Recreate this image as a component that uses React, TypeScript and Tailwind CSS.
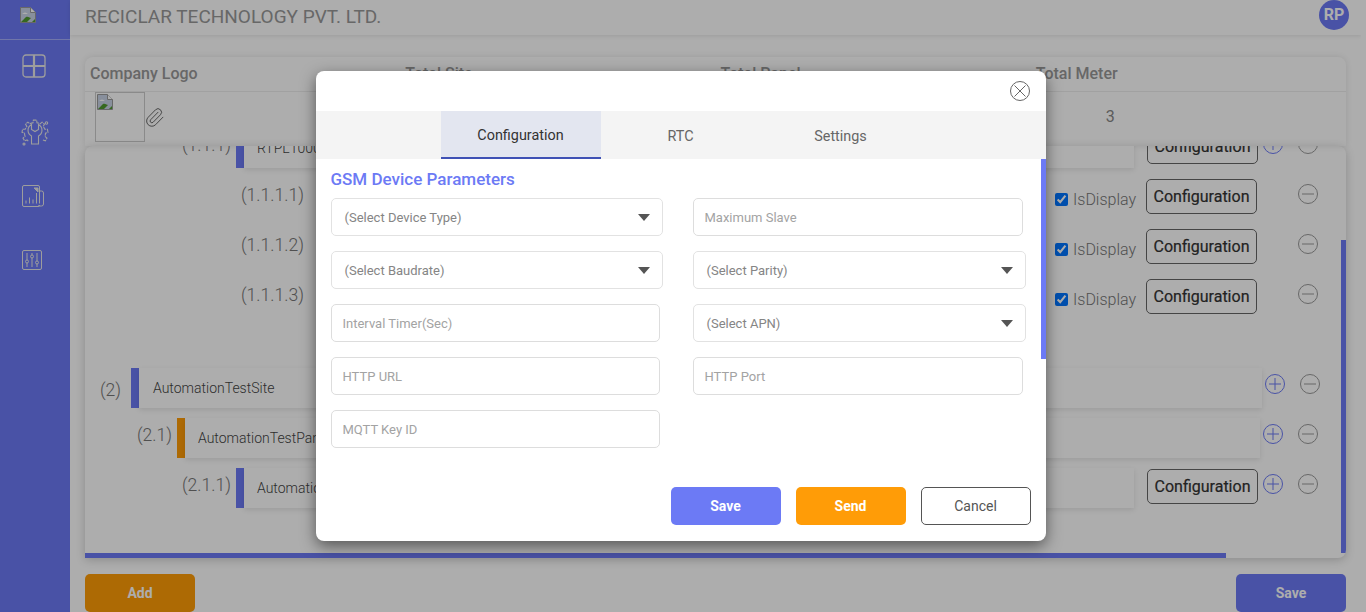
import { Paperclip } from 'lucide-react';

const font = { fontFamily: 'Roboto, sans-serif' };

// gear outline for the settings icon, open at the bottom where the wrench handle leaves it
const gearPath = (() => {
  const cx = 14;
  const cy = 14;
  const points: string[] = [];
  for (let i = 0; i < 7; i++) {
    const base = 130 + i * 40;
    const steps: Array<[number, number]> = [[base, 10.5], [base + 9, 10.5], [base + 13, 13], [base + 27, 13], [base + 31, 10.5]];
    steps.forEach(([deg, r]) => {
      const a = (deg * Math.PI) / 180;
      points.push(`${(cx + r * Math.cos(a)).toFixed(2)} ${(cy + r * Math.sin(a)).toFixed(2)}`);
    });
  }
  return `M${points.join('L')}`;
})();

function BrokenImage({ className }: { className?: string }) {
  return (
    <svg viewBox="0 0 16 16" className={className}>
      <path d="M0.5 0.5h10l5 5v10h-15z" fill="#c9d3e6" stroke="#9a9a9a" />
      <path d="M10.5 0.5v5h5" fill="#fff" stroke="#9a9a9a" />
      <path d="M2 7c2-2 4-2 6 0H2z" fill="#fff" />
      <path d="M1 15l5-5c2-1 4 1 5 1l-4 4z" fill="#4f9a2f" />
      <path d="M12 15l3-3v3z" fill="#4f9a2f" />
    </svg>
  );
}

function PlusIcon() {
  return (
    <svg viewBox="0 0 20 20" className="w-5 h-5 shrink-0" fill="none" stroke="#6c7af5" strokeWidth="1">
      <circle cx="10" cy="10" r="9.5" />
      <path d="M10 4v12M4 10h12" />
    </svg>
  );
}

function MinusIcon() {
  return (
    <svg viewBox="0 0 20 20" className="w-5 h-5 shrink-0" fill="none" stroke="#999" strokeWidth="1">
      <circle cx="10" cy="10" r="9.5" />
      <path d="M4 10h12" />
    </svg>
  );
}

function Caret() {
  return (
    <svg viewBox="0 0 12 7" className="w-[12px] h-[7px]">
      <path d="M0 0h12L6 7z" fill="#555" />
    </svg>
  );
}

function ConfigButton() {
  return (
    <button className="w-[111px] h-[35px] mt-px border border-[#666] rounded-[5px] text-[16px] text-[#333] [-webkit-text-stroke:0.2px_#333] shrink-0">
      Configuration
    </button>
  );
}

function TreeRow({ label, labelW, labelGap, barColor, text, textPad, cardW, config, plusGap, labelTop }: {
  label: string; labelW: string; labelGap: string; barColor: string; text: string; textPad: string; cardW: string; config?: boolean; plusGap: string; labelTop: string;
}) {
  return (
    <div className="flex items-start h-10">
      <span className={`${labelW} ${labelGap} ${labelTop} shrink-0 text-right text-[17.6px] font-light leading-[27px] text-[#777]`}>{label}</span>
      <div className={`${barColor} w-2 h-10 shrink-0`} />
      <div className={`${cardW} ${textPad} h-10 shrink-0 bg-white shadow-[0_2px_5px_rgba(0,0,0,0.1)] flex items-center text-[14px] font-light text-[#444]`}>
        {text}
      </div>
      {config && <div className="ml-[13px]"><ConfigButton /></div>}
      <div className={`${plusGap} mt-[6px] flex gap-[15px]`}>
        <PlusIcon />
        <MinusIcon />
      </div>
    </div>
  );
}

function MeterRow({ label }: { label: string }) {
  return (
    <div className="flex items-start h-10">
      <span className="w-[219px] mt-[4px] shrink-0 text-right text-[17.6px] font-light leading-[27px] text-[#777]">{label}</span>
      <label className="ml-[751px] w-[91px] h-[37px] shrink-0 flex items-center gap-[5px] text-[16px] font-light text-[#777]">
        <input type="checkbox" defaultChecked className="w-[13px] h-[13px] mt-[5px]" />
        <span className="mt-[7px]">IsDisplay</span>
      </label>
      <ConfigButton />
      <div className="ml-[41px] mt-[6px]"><MinusIcon /></div>
    </div>
  );
}

function TextField({ placeholder, width }: { placeholder: string; width: string }) {
  return (
    <input
      placeholder={placeholder}
      className={`${width} h-[38px] border border-[#ddd] rounded-[5px] pl-[11px] text-[13px] outline-none placeholder:text-[#a3a3a3]`}
    />
  );
}

function SelectField({ label, width }: { label: string; width: string }) {
  return (
    <button className={`${width} h-[38px] border border-[#e2e2e2] rounded-[5px] pl-[13px] pr-[12px] flex items-center justify-between text-[13px] text-[#858585]`}>
      <span className="mt-px">{label}</span>
      <Caret />
    </button>
  );
}

export default function App() {
  return (
    <div className="h-[612px] w-full overflow-hidden bg-[#adadad]" style={font}>
      <div className="relative flex h-[612px] w-[1361px] overflow-hidden bg-white">
        {/* Sidebar */}
        <aside className="w-[70px] shrink-0 bg-[#6c7af5] flex flex-col items-center">
          <div className="w-full h-10 border-b border-white/40 flex items-start pl-5 pt-[7px]">
            <BrokenImage className="w-4 h-4" />
          </div>
          <svg viewBox="0 0 24 24" className="w-[24px] h-[24px] mt-[14px] ml-[-3px]" fill="none" stroke="#e8e8e8" strokeWidth="1.3">
            <rect x="1" y="1" width="22" height="22" rx="3" />
            <path d="M12 1v22M1 12h22" strokeWidth="2.2" />
          </svg>
          <svg viewBox="0 0 28 28" className="w-[28px] h-[28px] mt-[41px] ml-[-1px]" fill="none" stroke="#e8e8e8" strokeWidth="1.1">
            <path d={gearPath} strokeDasharray="4 0.8" />
            <path d="M10.5 5.500A6.500 6.500 0 0 0 10.500 17V25H17.500V17A6.500 6.500 0 0 0 17.500 5.500V10.500L14 12.500L10.500 10.500Z" />
            <circle cx="25.500" cy="4" r="1.200" />
            <circle cx="3" cy="25" r="1" />
          </svg>
          <svg viewBox="0 0 22 22" className="w-[22px] h-[22px] mt-[38px] ml-[-5px]" fill="none" stroke="#e8e8e8" strokeWidth="1">
            <path d="M17.500 18.500V2a1.500 1.500 0 0 0-1.500-1.500H2A1.500 1.500 0 0 0 .5 2v18A1.500 1.500 0 0 0 2 21.500h14a1.500 1.500 0 0 0 1.500-1.500" />
            <path d="M17.500 6h2a2 2 0 0 1 2 2v11a2 2 0 0 1-2 2H16" />
            <path d="M4 18.500v-3M7.500 18.500v-6M11 18.500v-4M14.500 18.500V8" />
            <path d="M12 3h4v4z" fill="#e8e8e8" />
          </svg>
          <svg viewBox="0 0 20 20" className="w-[20px] h-[20px] mt-[43px] ml-[-6px]" fill="none" stroke="#e8e8e8" strokeWidth="1">
            <rect x="0.5" y="0.500" width="19" height="19" rx="1.500" />
            <path d="M5 3v7M5 13v4M10 3v2M10 8v9M15 3v8M15 14v3" />
            <circle cx="5" cy="11.500" r="1.500" />
            <circle cx="10" cy="6.500" r="1.500" />
            <circle cx="15" cy="12.500" r="1.500" />
          </svg>
        </aside>

        {/* Main */}
        <main className="flex-1 min-w-0 flex flex-col">
          <header className="h-[35px] shrink-0 flex items-start justify-between pl-[15px] pr-[12px] shadow-[0_1px_4px_rgba(0,0,0,0.1)]">
            <h1 className="text-[19px] leading-[33px] text-[#999] uppercase">Reciclar Technology Pvt. Ltd.</h1>
            <div className="w-[30px] h-[30px] rounded-full bg-[#6c7af5] text-white font-bold text-[16px] flex items-center justify-center">RP</div>
          </header>

          <div className="flex-1 min-h-0 flex flex-col pt-[22px] pl-[15px] pr-[15px]">
            <section className="h-[89px] shrink-0 rounded-t-lg shadow-[0_0_6px_rgba(0,0,0,0.1)]">
              <div className="grid grid-cols-4 h-[35px] border-b border-[#eee] text-[16px] font-medium text-[#999] leading-[33px]">
                <span className="pl-[5px]">Company Logo</span>
                <span className="pl-[5px]">Total Site</span>
                <span className="pl-[5px]">Total Panel</span>
                <span className="pl-[5px]">Total Meter</span>
              </div>
              <div className="grid grid-cols-4">
                <div className="flex items-center pl-[10px]">
                  <div className="w-[50px] h-[50px] border border-[#ccc] p-[1px]">
                    <BrokenImage className="w-4 h-4" />
                  </div>
                  <Paperclip className="w-[21px] h-[21px] -ml-px text-[#555]" strokeWidth={1} />
                </div>
                <span />
                <span />
                <span className="pl-[75px] text-[16px] leading-[50px] text-[#888]">3</span>
              </div>
            </section>

            <section className="relative h-[412px] shrink-0 rounded-t-lg rounded-br-lg overflow-hidden shadow-[0_2px_10px_rgba(0,0,0,0.2)]">
              <div className="-mt-[18px] flex flex-col gap-[10px]">
                <TreeRow label="(1.1.1)" labelW="w-[146px]" labelGap="mr-[5px]" labelTop="mt-[4px]" barColor="bg-[#6c7af5]" text="RTPL1000" textPad="pl-[13px]" cardW="w-[890px]" config plusGap="ml-[5px]" />
                <MeterRow label="(1.1.1.1)" />
                <MeterRow label="(1.1.1.2)" />
                <MeterRow label="(1.1.1.3)" />
                <div className="mt-[40px]">
                  <TreeRow label="(2)" labelW="w-[36px]" labelGap="mr-[10px]" labelTop="mt-[9px]" barColor="bg-[#6c7af5]" text="AutomationTestSite" textPad="pl-[14px]" cardW="w-[1123px]" plusGap="ml-[3px]" />
                </div>
                <TreeRow label="(2.1)" labelW="w-[87px]" labelGap="mr-[5px]" labelTop="mt-[4px]" barColor="bg-[#ff9c07]" text="AutomationTestPanel" textPad="pl-[13px]" cardW="w-[1075px]" plusGap="ml-[3px]" />
                <TreeRow label="(2.1.1)" labelW="w-[146px]" labelGap="mr-[5px]" labelTop="mt-[4px]" barColor="bg-[#6c7af5]" text="AutomationTestMeter" textPad="pl-[13px]" cardW="w-[890px]" config plusGap="ml-[5px]" />
              </div>
              {/* scrollbars */}
              <div className="absolute right-0 top-[94px] w-[5px] h-[313px] bg-[#6c7af5]" />
              <div className="absolute left-0 bottom-0 w-[1141px] h-[5px] bg-[#6c7af5]" />
            </section>

            <div className="flex justify-between mt-4">
              <button className="w-[110px] h-[38px] rounded-[5px] bg-[#ff9c07] text-white text-[14px] font-bold">Add</button>
              <button className="w-[110px] h-[38px] rounded-[5px] bg-[#6c7af5] text-white text-[14px] font-bold">Save</button>
            </div>
          </div>
        </main>

        {/* Modal backdrop */}
        <div className="absolute inset-0 bg-black/[0.32] flex items-start justify-center pt-[71px]">
          <div className="relative w-[730px] h-[470px] bg-white rounded-lg overflow-hidden shadow-[0_5px_15px_rgba(0,0,0,0.5)] flex flex-col">
            <div className="h-10 shrink-0 flex items-center justify-end pr-[16px]">
              <svg viewBox="0 0 20 20" className="w-5 h-5" fill="none" stroke="#666" strokeWidth="1">
                <circle cx="10" cy="10" r="9.500" />
                <path d="M4.500 4.500l11 11M15.500 4.500l-11 11" />
              </svg>
            </div>
            <div className="h-12 shrink-0 bg-[#f4f4f4] flex pl-[125px] text-[14.4px] text-[#666]">
              <div className="w-40 flex items-center justify-center pt-[3px] bg-[#e3e6f0] border-b-2 border-[#3f51b5] text-[#333]">Configuration</div>
              <div className="w-40 flex items-center justify-center pt-[3px]">RTC</div>
              <div className="w-40 flex items-center justify-center pt-[3px]">Settings</div>
            </div>
            <div className="absolute right-0 top-[88px] w-[5px] h-[200px] bg-[#6c7af5]" />
            <div className="pl-[15px] pt-[11px]">
              <h2 className="text-[17px] leading-[19px] font-medium text-[#6c7af5]">GSM Device Parameters</h2>
              <div className="grid grid-cols-[362px_1fr] gap-y-[15px] mt-[9px]">
                <SelectField label="(Select Device Type)" width="w-[332px]" />
                <TextField placeholder="Maximum Slave" width="w-[330px]" />
                <SelectField label="(Select Baudrate)" width="w-[332px]" />
                <SelectField label="(Select Parity)" width="w-[333px]" />
                <TextField placeholder="Interval Timer(Sec)" width="w-[329px]" />
                <SelectField label="(Select APN)" width="w-[333px]" />
                <TextField placeholder="HTTP URL" width="w-[329px]" />
                <TextField placeholder="HTTP Port" width="w-[330px]" />
                <TextField placeholder="MQTT Key ID" width="w-[329px]" />
              </div>
            </div>
            <div className="flex justify-end gap-[15px] pr-[15px] mt-[39px]">
              <button className="w-[110px] h-[38px] rounded-[5px] bg-[#6c7af5] text-white text-[14px] font-bold">Save</button>
              <button className="w-[110px] h-[38px] rounded-[5px] bg-[#ff9c07] text-white text-[14px] font-bold">Send</button>
              <button className="w-[110px] h-[38px] rounded-[5px] border border-[#555] text-[#555] text-[14px]">Cancel</button>
            </div>
          </div>
        </div>
      </div>
    </div>
  );
}
